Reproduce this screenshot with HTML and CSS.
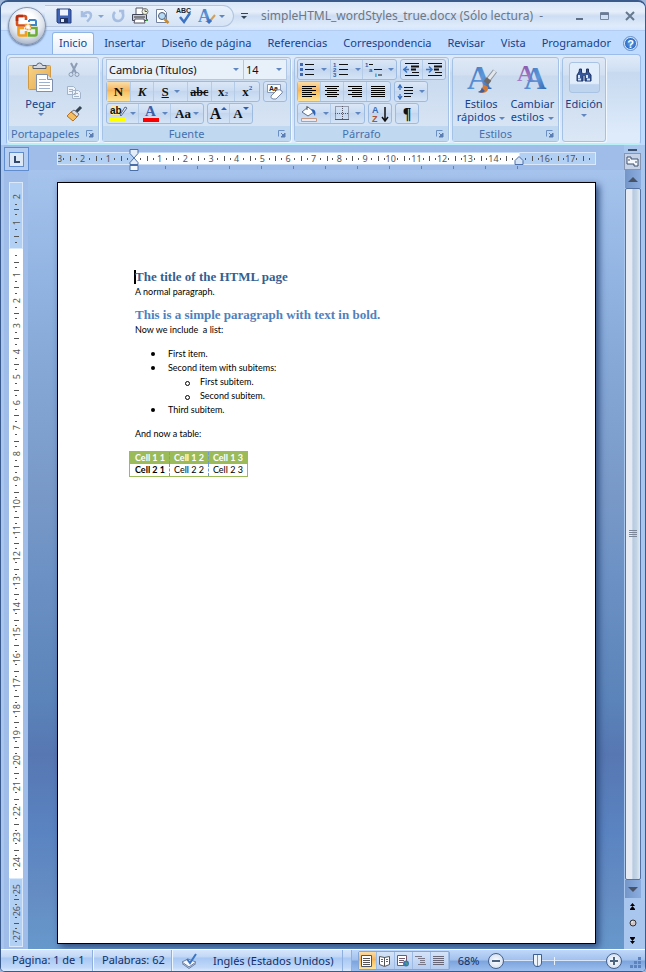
FILE: index.html
```html
<!DOCTYPE html>
<html lang="es">
<head>
<meta charset="utf-8">
<meta name="viewport" content="width=device-width, initial-scale=1">
<title>simpleHTML_wordStyles_true.docx</title>
<link rel="stylesheet" href="styles.css">
</head>
<body>
<svg class="defs" aria-hidden="true">
  <defs>
    <linearGradient id="g-blue" x1="0" y1="0" x2="1" y2="1"><stop offset="0" stop-color="#2f62b0"/><stop offset=".55" stop-color="#5f97da"/><stop offset="1" stop-color="#24549f"/></linearGradient>
    <linearGradient id="g-purple" x1="0" y1="0" x2="0" y2="1"><stop offset="0" stop-color="#7b4fa6"/><stop offset="1" stop-color="#b58ad0"/></linearGradient>
    <linearGradient id="g-clip" x1="0" y1="0" x2="1" y2="1"><stop offset="0" stop-color="#f8d489"/><stop offset="1" stop-color="#e3a94b"/></linearGradient>
    <symbol id="launch" viewBox="0 0 8 8"><path d="M.5 6.500V.5H6.500" fill="none" stroke="#6a8fc3"/><path d="M3 3l3 3M7 3v4H3z" fill="#5a7eb4" stroke="#5a7eb4"/></symbol>
  </defs>
</svg>
<div class="window">
  <header class="titlebar">
    <button class="office" aria-label="Botón de Office">
      <svg viewBox="0 0 24 24" width="24" height="24" fill="none" stroke-width="2.600">
        <path d="M10 11.500H3.500Q2 11.500 2 10V3.500Q2 2 3.500 2H9.500Q11 2 11 3.500V6" stroke="#d9501f"/>
        <path d="M2 7V3.500Q2 2 3.500 2H8" stroke="#b72f12"/>
        <path d="M14 6H19.500Q21 6 21 7.500V11H15M14 6v2" stroke="#3f86c9" stroke-width="2"/>
        <path d="M9 14H3.500V20Q3.500 21.500 5 21.500H11V17" stroke="#f2a01c"/>
        <path d="M14 18V21.500H20Q21.500 21.500 21.500 20V14H16" stroke="#6fae35"/>
        <path d="M10.500 10.500h5v5h-5z" stroke="#e9a13b" stroke-width="1.500" stroke-dasharray="2 1"/>
      </svg>
    </button>
    <div class="qat">
      <button aria-label="Guardar"><svg width="16" height="16" viewBox="0 0 16 16"><path d="M1 1h13l1 1v13H2l-1-1z" fill="#3f63b5" stroke="#26407f"/><path d="M4 1.500h8v6H4z" fill="#eef4fd"/><path d="M4 10h8v5H4z" fill="#23335f"/><path d="M5 11h3v3H5z" fill="#dfe8f6"/></svg></button>
      <button class="wide off" aria-label="Deshacer"><svg width="16" height="16" viewBox="0 0 16 16"><path d="M3 3v5h5M3.500 7.500C6 3 12 3 12 7.500c0 3-2 4-4 6" fill="none" stroke="#8facd9" stroke-width="2.500"/></svg><i class="arrow"></i></button>
      <button class="off" aria-label="Repetir"><svg width="16" height="16" viewBox="0 0 16 16"><path d="M9 3h4v4M12 4c3 4 0 9-4 9-5 0-6-6-3-9" fill="none" stroke="#8facd9" stroke-width="2.500"/></svg></button>
      <button aria-label="Impresión rápida"><svg width="18" height="18" viewBox="0 0 18 18"><path d="M5 7V1h7v6" fill="#fff" stroke="#556"/><path d="M1.500 7.500h14v6h-14z" fill="#c9ccd4" stroke="#3f4556"/><path d="M3 10h11" stroke="#333"/><path d="M4 12h9l1 4H3z" fill="#fff" stroke="#556"/><circle cx="14" cy="4.500" r="3" fill="#f2f4dc" stroke="#777"/><path d="M14 2.500v2h2" fill="none" stroke="#555"/><path d="M15 12h2v2h-2z" fill="#3ba33b"/></svg></button>
      <button aria-label="Vista preliminar"><svg width="16" height="16" viewBox="0 0 16 16"><path d="M2.500 1.500h7l3 3v10h-10z" fill="#fff" stroke="#7484a0"/><circle cx="8" cy="8" r="3.500" fill="#b7daf5" stroke="#4e5b73"/><path d="M10.500 11l4 4" stroke="#c98a2d" stroke-width="2.500"/></svg></button>
      <button aria-label="Ortografía"><svg width="18" height="18" viewBox="0 0 18 18"><text x="1" y="6" class="abc">ABC</text><path d="M5 10l4 5 6-9" fill="none" stroke="#3c72c4" stroke-width="2.500"/></svg></button>
      <button class="wide" aria-label="Estilos"><svg width="18" height="18" viewBox="0 0 18 18"><text x="0" y="15" class="bigA" font-size="18" fill="url(#g-blue)">A</text><path d="M17 8l-5 6" stroke="#d0a060" stroke-width="2"/><path d="M13 13l-3 3" stroke="#3c72c4" stroke-width="3"/></svg><i class="arrow"></i></button>
    </div>
    <button class="more" aria-label="Personalizar"><i></i></button>
    <h1 class="caption">simpleHTML_wordStyles_true.docx (Sólo lectura) &nbsp;-</h1>
    <div class="winbtns">
      <button aria-label="Minimizar"><svg width="10" height="10"><path d="M1 8h7" stroke="#5f7087" stroke-width="2"/></svg></button>
      <button aria-label="Maximizar"><svg width="10" height="10"><path d="M.5 1.500h8v7h-8z" fill="none" stroke="#7587a0"/><path d="M0 3h9" stroke="#6a7b93" stroke-width="2"/></svg></button>
      <button aria-label="Cerrar"><svg width="10" height="10"><path d="M1 1l8 8M9 1l-8 8" stroke="#66788f" stroke-width="2"/></svg></button>
    </div>
  </header>

  <nav class="tabs">
    <a href="#" class="active">Inicio</a><a href="#">Insertar</a><a href="#">Diseño de página</a><a href="#">Referencias</a><a href="#">Correspondencia</a><a href="#">Revisar</a><a href="#">Vista</a><a href="#">Programador</a>
    <button class="help" aria-label="Ayuda">?</button>
  </nav>

  <section class="ribbon">
    <div class="group g-clip">
      <div class="body clip">
        <button class="big"><svg width="28" height="32" viewBox="0 0 28 32"><rect x="1.500" y="3.500" width="22" height="24" rx="1" fill="url(#g-clip)" stroke="#d09a45"/><path d="M6 6.500V3.500h3.500Q10 1 12.500 1T15.500 3.500H19v3z" fill="#d6dae0" stroke="#5c6270"/><path d="M9.500 12.500h11l5 5v12h-16z" fill="#fff" stroke="#7e90ae"/><path d="M20.500 12.500v5h5" fill="#dfe7f3" stroke="#7e90ae"/><path d="M12 17.500h7M12 20.500h11M12 23.500h11M12 26.500h11" stroke="#9db0cc"/></svg><span>Pegar</span><i class="arrow"></i></button>
        <div class="stack">
          <button aria-label="Cortar"><svg width="16" height="16" viewBox="0 0 16 16" fill="none" stroke="#8d9db5"><path d="M5 1l5 10M11 1L6 11" stroke-width="2"/><circle cx="5" cy="12.500" r="2"/><circle cx="11" cy="12.500" r="2"/></svg></button>
          <button aria-label="Copiar"><svg width="16" height="16" viewBox="0 0 16 16" fill="#eff4fb" stroke="#a3b3ca"><path d="M1.500 2.500h6l2 2v6h-8zM6.500 6.500h6l2 2v6h-8z"/><path d="M3 5.500h4M3 7.500h3M8 9.500h4M8 12.500h5"/></svg></button>
          <button aria-label="Copiar formato"><svg width="16" height="16" viewBox="0 0 16 16"><path d="M15 1l-5 5" stroke="#345" stroke-width="3"/><path d="M8 4l5 4-2 3-6-5z" fill="#d9dee6" stroke="#6a6f7d"/><path d="M5 6l6 5-4 4-6-5z" fill="#f3bf62" stroke="#b9711d"/></svg></button>
        </div>
      </div>
      <footer>Portapapeles<svg class="launch" width="8" height="8"><use href="#launch"/></svg></footer>
    </div>

    <div class="group g-font">
      <div class="body">
        <div class="row">
          <div class="combos">
            <label class="combo name"><select aria-label="Fuente"><option>Cambria (Títulos)</option></select><i class="arrow"></i></label>
            <label class="combo size"><select aria-label="Tamaño"><option>14</option></select><i class="arrow"></i></label>
          </div>
        </div>
        <div class="row">
          <div class="set grow">
            <button class="on glyph">N</button><button class="glyph it">K</button><button class="glyph un wide">S<i class="arrow"></i></button><button class="glyph st">abc</button><button class="glyph">x<sub>2</sub></button><button class="glyph">x<sup>2</sup></button>
          </div>
          <div class="set"><button aria-label="Borrar formato"><svg width="18" height="16" viewBox="0 0 18 16"><path d="M1.500.5h13v8h-13z" fill="#fff" stroke="#8a9ab5"/><text x="3" y="7" class="abc">Aa</text><path d="M5 12l6-6q3-1 5 1 1 2-1 3l-5 5H7q-3-1-2-3z" fill="#fff" stroke="#7486a6"/></svg></button></div>
        </div>
        <div class="row">
          <div class="set w98">
            <button class="wide" aria-label="Resaltado"><svg width="18" height="17" viewBox="0 0 18 17"><path d="M1 1h9v9H1z" fill="#ffeaa0"/><text x="0" y="9" class="ab">ab</text><path d="M15 2l-5 8 1 1 6-8z" fill="#dce6f4" stroke="#576b8d"/><path d="M0 13h16v4H0z" fill="#ffff00"/></svg><i class="arrow"></i></button>
            <button class="wide" aria-label="Color de fuente"><svg width="18" height="17" viewBox="0 0 18 17"><text x="3" y="11" class="bigA" font-size="15" fill="#3c61a8">A</text><path d="M1 13h16v4H1z" fill="#fb0000"/></svg><i class="arrow"></i></button>
            <button class="glyph wide">Aa<i class="arrow"></i></button>
          </div>
          <div class="set"><button class="glyph lg">A<b class="tri up"></b></button><button class="glyph">A<b class="tri"></b></button></div>
        </div>
      </div>
      <footer>Fuente<svg class="launch" width="8" height="8"><use href="#launch"/></svg></footer>
    </div>

    <div class="group g-para">
      <div class="body">
        <div class="row">
          <div class="set w100">
            <button class="wide" aria-label="Viñetas"><svg width="16" height="15"><path d="M5 2.500h9M5 7.500h9M5 12.500h9" stroke="#111"/><path d="M0 1h3v3H0zM0 6h3v3H0zM0 11h3v3H0z" fill="#4069b4"/></svg><i class="arrow"></i></button>
            <button class="wide" aria-label="Numeración"><svg width="17" height="15"><path d="M6 2.500h9M6 7.500h9M6 12.500h9" stroke="#111"/><text class="num" x="0" y="5">1</text><text class="num" x="0" y="10">2</text><text class="num" x="0" y="15">3</text></svg><i class="arrow"></i></button>
            <button class="wide" aria-label="Lista multinivel"><svg width="18" height="15"><path d="M4 2.500h4M9 7.500h8M13 13h4" stroke="#111"/><text class="num" x="0" y="5">1</text><text class="num" x="4" y="10">a</text><text class="num" x="10" y="15">i</text></svg><i class="arrow"></i></button>
          </div>
          <div class="set"><button aria-label="Disminuir sangría"><svg width="17" height="15"><path d="M2 1.500h14M9 10.500h7M2 13.500h14" stroke="#111"/><path d="M8 4.500h8M8 7.500h5" stroke="#111" stroke-width="2"/><path d="M0 7.500h6M4 4.500l-3 3 3 3" fill="none" stroke="#3b78c9" stroke-width="1.500"/></svg></button><button aria-label="Aumentar sangría"><svg width="17" height="15"><path d="M2 1.500h14M9 10.500h7M2 13.500h14" stroke="#111"/><path d="M8 4.500h8M8 7.500h5" stroke="#111" stroke-width="2"/><path d="M0 7.500h6M3 4.500l3 3-3 3" fill="none" stroke="#3b78c9" stroke-width="1.500"/></svg></button></div>
        </div>
        <div class="row">
          <div class="set w94">
            <button class="on" aria-label="Izquierda"><svg width="15" height="11"><path d="M0 .5h14M0 2.500h10M0 4.500h14M0 6.500h10M0 8.500h14M0 10.500h10" stroke="#000"/></svg></button><button aria-label="Centrar"><svg width="15" height="11"><path d="M0 .5h14M2 2.500h10M0 4.500h14M2 6.500h10M0 8.500h14M2 10.500h10" stroke="#000"/></svg></button><button aria-label="Derecha"><svg width="15" height="11"><path d="M0 .5h14M4 2.500h10M0 4.500h14M4 6.500h10M0 8.500h14M4 10.500h10" stroke="#000"/></svg></button><button aria-label="Justificar"><svg width="15" height="11"><path d="M0 .5h14M0 2.500h14M0 4.500h14M0 6.500h14M0 8.500h14M0 10.500h14" stroke="#000"/></svg></button>
          </div>
          <div class="set"><button class="wide" aria-label="Interlineado"><svg width="17" height="16"><path d="M7 3.500h9M7 6.500h9M7 9.500h9M7 12.500h7" stroke="#111"/><path d="M3 1v5M3 10v5M1 4l2-3 2 3M1 12l2 3 2-3" fill="none" stroke="#386fc0" stroke-width="1.300"/></svg><i class="arrow"></i></button></div>
        </div>
        <div class="row">
          <div class="set w68"><button class="wide" aria-label="Sombreado"><svg width="18" height="17"><path d="M2 7l6-5 6 5-6 4z" fill="#fff" stroke="#5b6f92"/><path d="M7 5V1" stroke="#555"/><path d="M11 4q6 0 4 7l-2-3z" fill="#2e62b5"/><path d="M1.500 13.500h15v3h-15z" fill="#e6eaf5" stroke="#c79a83"/></svg><i class="arrow"></i></button><button class="wide" aria-label="Bordes"><svg width="15" height="15"><path d="M.5.5h13v13H.5zM7.500 0v14M0 7.500h14" fill="none" stroke="#556" stroke-dasharray="1 1"/><path d="M0 13.500h14" stroke="#556"/></svg><i class="arrow"></i></button></div>
          <div class="set"><button aria-label="Ordenar"><svg width="17" height="18"><text class="az a" x="0" y="8">A</text><text class="az z" x="0" y="17">Z</text><path d="M13 2v13M10 12l3 4 3-4" fill="none" stroke="#111" stroke-width="1.500"/></svg></button></div>
          <div class="set"><button class="mark" aria-label="Mostrar todo">¶</button></div>
        </div>
      </div>
      <footer>Párrafo<svg class="launch" width="8" height="8"><use href="#launch"/></svg></footer>
    </div>

    <div class="group g-style">
      <div class="body pair">
        <button class="big"><svg width="32" height="32" viewBox="0 0 32 32"><text x="2" y="27" class="bigA" font-size="34" fill="url(#g-blue)">A</text><path d="M30 9l-7 9" stroke="#8d949f" stroke-width="5"/><path d="M30 9l-7 9" stroke="#e3e6ea" stroke-width="3"/><path d="M24 17l-3 4" stroke="#6f6a68" stroke-width="6"/><path d="M13 30q5-2 5-8l5 3q1 5-5 6z" fill="#d77a31"/><path d="M13 30q3-1 4-4l3 3q-3 3-7 1z" fill="#2f62b0"/></svg><span>Estilos<br>rápidos <i class="arrow"></i></span></button>
        <button class="big"><svg width="32" height="32" viewBox="0 0 32 32"><text x="1" y="19" class="bigA" font-size="24" fill="url(#g-purple)">A</text><text x="8" y="27" class="bigA" font-size="31" fill="url(#g-blue)">A</text></svg><span>Cambiar<br>estilos <i class="arrow"></i></span></button>
      </div>
      <footer>Estilos<svg class="launch" width="8" height="8"><use href="#launch"/></svg></footer>
    </div>

    <div class="group g-edit">
      <button class="big"><span class="tile"><svg width="16" height="14" viewBox="0 0 16 14"><path d="M3.500 1h2v3l1.500 3v6H1V7l2-3zM10.500 1h2v3L15 7v6H9V7l1.500-3z" fill="#36589b" stroke="#1d3365"/><path d="M6 5h4v3H6z" fill="#36589b"/><path d="M3 7v3M11 7v3M2 11.500h3M11 11.500h3" stroke="#d6e5fa" stroke-width="2"/></svg></span><span>Edición</span><i class="arrow"></i></button>
    </div>
  </section>

  <main class="work">
    <div class="left">
      <button class="tabsel" aria-label="Tabulación"><i></i></button>
      <div class="vruler">
        <div class="seg margin s1"><span class="part"></span><span class="n open"><b>2</b></span><span class="n"><b>1</b></span><span class="half"></span></div>
        <div class="seg s2"><span class="half"></span><span class="n"><b>1</b></span><span class="n"><b>2</b></span><span class="n"><b>3</b></span><span class="n"><b>4</b></span><span class="n"><b>5</b></span><span class="n"><b>6</b></span><span class="n"><b>7</b></span><span class="n"><b>8</b></span><span class="n"><b>9</b></span><span class="n"><b>10</b></span><span class="n"><b>11</b></span><span class="n"><b>12</b></span><span class="n"><b>13</b></span><span class="n"><b>14</b></span><span class="n"><b>15</b></span><span class="n"><b>16</b></span><span class="n"><b>17</b></span><span class="n"><b>18</b></span><span class="n"><b>19</b></span><span class="n"><b>20</b></span><span class="n"><b>21</b></span><span class="n"><b>22</b></span><span class="n"><b>23</b></span><span class="n"><b>24</b></span><span class="part"></span></div>
        <div class="seg margin s3"><span class="n open"><b>25</b></span><span class="n"><b>26</b></span><span class="n"><b>27</b></span></div>
      </div>
    </div>

    <div class="center">
      <div class="hbar">
        <div class="hruler">
          <div class="seg margin h3"><span class="half first"><b>3</b></span><span class="n"><b>2</b></span><span class="n"><b>1</b></span><span class="half edge"></span></div>
          <div class="seg h15"><svg class="indent" width="10" height="22" viewBox="0 0 10 22"><path d="M1 .5h8v4L5 9l4 4.500v2H1v-2L5 9 1 4.500z" fill="#e3edf9" stroke="#4a6fa8"/><path d="M1 16.500h8v5H1z" fill="#f4f8fd" stroke="#4a6fa8"/></svg><span class="half"></span><span class="n"><b>1</b></span><span class="n"><b>2</b></span><span class="n"><b>3</b></span><span class="n"><b>4</b></span><span class="n"><b>5</b></span><span class="n"><b>6</b></span><span class="n"><b>7</b></span><span class="n"><b>8</b></span><span class="n"><b>9</b></span><span class="n"><b>10</b></span><span class="n"><b>11</b></span><span class="n"><b>12</b></span><span class="n"><b>13</b></span><span class="n"><b>14</b></span><span class="half edge"></span></div>
          <div class="seg margin h3"><svg class="rindent" width="10" height="9" viewBox="0 0 10 9"><path d="M5 .5l4 4v4H1v-4z" fill="#d4e2f5" stroke="#4a6fa8"/></svg><span class="half"></span><span class="n"><b>16</b></span><span class="n"><b>17</b></span><span class="half edge"></span></div>
        </div>
        <div class="stops"></div>
      </div>
      <div class="canvas">
        <article class="page">
          <h2 class="h-one"><span class="caret"></span>The title of the HTML page</h2>
          <p>A normal paragraph.</p>
          <h3 class="h-two">This is a simple paragraph with text in bold.</h3>
          <p>Now we include&nbsp; a list:</p>
          <ul>
            <li>First item.</li>
            <li>Second item with subitems:
              <ul><li>First subitem.</li><li>Second subitem.</li></ul>
            </li>
            <li>Third subitem.</li>
          </ul>
          <p>And now a table:</p>
          <table>
            <thead><tr><th>Cell 1 1</th><th>Cell 1 2</th><th>Cell 1 3</th></tr></thead>
            <tbody><tr><th>Cell 2 1</th><td>Cell 2 2</td><td>Cell 2 3</td></tr></tbody>
          </table>
        </article>
      </div>
    </div>

    <div class="right">
      <i class="split"></i>
      <button class="rtoggle" aria-label="Regla"><svg width="13" height="13" viewBox="0 0 13 13"><path d="M1 2h4v2h7v7H8V9H1z" fill="#f5f8fc" stroke="#3f506c"/><path d="M3 4v2M10 6v2" stroke="#3f506c"/></svg></button>
      <div class="scroll"><button class="sb" aria-label="Arriba"><i class="st-up"></i></button><div class="thumb"><i></i></div><button class="sb" aria-label="Abajo"><i class="st-down"></i></button></div>
      <div class="browse">
        <button aria-label="Página anterior"><svg width="7" height="7"><path d="M3.500 0L6 3H1zM3.500 3L6 6H1zM1 6h5v1H1z" fill="#000"/></svg></button>
        <button aria-label="Objeto"><svg width="8" height="8"><circle cx="4" cy="4" r="3" fill="#cfc5c8" stroke="#333"/><path d="M2.500 3.500l1.500-1" stroke="#fff"/></svg></button>
        <button aria-label="Página siguiente"><svg width="7" height="7"><path d="M3.500 7L6 4H1zM3.500 4L6 1H1zM1 0h5v1H1z" fill="#000"/></svg></button>
      </div>
    </div>
  </main>

  <footer class="status">
    <span class="s-page">Página: 1 de 1</span>
    <span class="s-words">Palabras: 62</span>
    <span class="s-proof"><svg width="17" height="16" viewBox="0 0 17 16"><path d="M1 9l6-3 8 3-7 5z" fill="#f5f7fb" stroke="#6c7f9e"/><path d="M1 10.500l7 5 7-5" fill="none" stroke="#6c7f9e"/><path d="M6 6l3 4 6-9" fill="none" stroke="#3b77c6" stroke-width="2"/></svg></span>
    <span class="s-lang">Inglés (Estados Unidos)</span>
    <span class="s-gap"></span>
    <div class="s-right">
      <div class="views">
        <button class="on" aria-label="Diseño de impresión"><svg width="12" height="12"><path d="M.5.5h10v11H.5z" fill="#fff" stroke="#4b5568"/><path d="M2 3.500h7M2 5.500h7M2 7.500h7M2 9.500h7" stroke="#555"/></svg></button>
        <button aria-label="Lectura"><svg width="12" height="12"><path d="M.5 1.500l5 1 5-1v8l-5 2-5-2zM5.500 2v9" fill="#fff" stroke="#555"/><path d="M2 4.500h2M2 6.500h2M7 4.500h2M7 6.500h2" stroke="#666"/></svg></button>
        <button aria-label="Web"><svg width="13" height="12"><path d="M.5.5h9v10h-9z" fill="#fff" stroke="#735a6a"/><path d="M2 3.500h6M2 5.500h5M2 7.500h4" stroke="#735a6a"/><circle cx="9" cy="8.500" r="3" fill="#3978b8"/><path d="M8 8h2v2" stroke="#59ab52" fill="none"/></svg></button>
        <button aria-label="Esquema"><svg width="12" height="12"><path d="M0 1.500h7M3 3.500h7M5 5.500h5M5 7.500h5M3 9.500h8" stroke="#778" /></svg></button>
        <button aria-label="Borrador"><svg width="12" height="12"><path d="M0 1.500h11M0 3.500h11M0 5.500h11M0 7.500h11M0 9.500h11" stroke="#667"/></svg></button>
      </div>
      <button class="pct">68%</button>
      <button class="zoom" aria-label="Alejar"><i></i></button>
      <input class="slider" type="range" min="0" max="100" value="32" aria-label="Zoom">
      <button class="zoom plus" aria-label="Acercar"><i></i></button>
      <svg class="grip" width="12" height="12"><path d="M8 0h3v3H8zM4 4h3v3H4zM8 4h3v3H8zM0 8h3v3H0zM4 8h3v3H4zM8 8h3v3H8z" fill="#5c83bd"/></svg>
    </div>
  </footer>
</div>
</body>
</html>
```
FILE: styles.css
```css
*, *::before, *::after { box-sizing: border-box; }
body { margin: 0; background: #9fb6d8; font: 11px/16px "Noto Sans", "Open Sans", sans-serif; color: #15428b; }
button { font: inherit; color: inherit; border: 0; padding: 0; margin: 0; background: none; display: flex; align-items: center; justify-content: center; }
svg { display: block; flex: none; overflow: visible; }
.defs { position: absolute; width: 0; height: 0; }
.window { min-height: 100vh; display: flex; flex-direction: column; border: 1px solid #3b5a8c; border-top-width: 2px; border-radius: 8px 8px 5px 5px; background: #bfdbff; overflow: hidden; }
.arrow { flex: none; display: inline-block; border: 3px solid transparent; border-top-color: #5f86c0; border-bottom: 0; vertical-align: middle; }

/* Title bar */
.titlebar { height: 29px; display: flex; align-items: center; padding: 0 10px 0 44px; position: relative; background: linear-gradient(#d9e7f9, #e6eefa 35%, #cdddf3 50%, #dfebfb 85%, #d3e6ff); border-bottom: 1px solid #b2cdf1; }
.office { position: absolute; left: 7px; top: 5px; z-index: 2; width: 38px; height: 38px; border-radius: 50%; border: 1px solid #8193b0; background: radial-gradient(circle at 50% 35%, #fff 25%, #dfe4ec 55%, #a9b5c9 80%, #eef2f8); box-shadow: 0 1px 2px #5d7396; }
.qat { display: flex; align-items: center; height: 22px; width: 189px; padding-left: 8px; border: 1px solid #b3c5df; border-left: 0; border-radius: 0 11px 11px 0; background: linear-gradient(#e9f1fb, #d5e3f5); }
.qat button { width: 22px; height: 20px; }
.qat .wide { width: 32px; gap: 3px; }
.qat .off { opacity: .7; }
.more { width: 20px; height: 20px; }
.more i { width: 7px; height: 7px; border-top: 1px solid #345; position: relative; }
.more i::after { content: ""; position: absolute; top: 2px; left: 0; border: 3px solid transparent; border-top-color: #345; border-bottom: 0; }
.caption { margin: 0 0 0 7px; font: 12px/18px "Noto Sans", sans-serif; color: #6d7785; white-space: nowrap; }
.winbtns { margin-left: auto; display: flex; gap: 15px; }
.abc { font: bold 7px "Liberation Sans", sans-serif; fill: #222; }
.ab { font: bold 10px "Liberation Sans", sans-serif; fill: #111; }
.num { font: bold 6px "Liberation Sans", sans-serif; fill: #2f5da8; }
.az { font: bold 9px "Liberation Sans", sans-serif; }
.bigA { font-family: "Liberation Serif", serif; font-weight: bold; }
.a { fill: #3568b5; }
.z { fill: #a8543b; }

/* Tabs */
.tabs { height: 23px; display: flex; align-items: flex-end; padding: 0 8px 0 51px; background: #bfdbff; }
.tabs a { color: #15428b; text-decoration: none; padding: 3px 8px; height: 22px; white-space: nowrap; }
.tabs .active { padding: 2px 6px; margin-right: 2px; border: 1px solid #8eb4e5; border-bottom: 0; border-radius: 3px 3px 0 0; background: linear-gradient(#fff, #e4eefb); }
.help { flex: none; margin: 0 0 4px auto; width: 13px; height: 13px; border-radius: 50%; border: 1px solid #d9e8fb; outline: 1px solid #6a8ec4; background: radial-gradient(#5aa0ee, #1b55b0); color: #fff; font: bold 11px/12px "Liberation Sans", sans-serif; }

/* Ribbon */
.ribbon { display: flex; gap: 3px; height: 91px; margin: 0 4px 0 5px; padding: 2px 1px 1px; border: 1px solid #9cbde9; border-bottom: 2px solid #b8f0f8; border-radius: 4px; background: linear-gradient(#e0ebf9, #cfdff3 18%, #c6d9ef 20%, #deebfb 90%); }
.group { flex: none; display: flex; flex-direction: column; border: 1px solid #a4c2e6; border-radius: 3px; background: linear-gradient(#dfe9f6, #d2e0f2 20%, #c9daef 22%, #dbe7f5); box-shadow: 1px 1px 0 #f0f7ff; }
.group > footer { display: flex; align-items: center; justify-content: center; height: 15px; padding: 0 4px 0 2px; background: #c1d8f1; color: #4470ae; }
.group > footer .launch { margin-left: auto; }
.g-font > footer, .g-para > footer, .g-style > footer { position: relative; padding: 0 20px 0 0; }
.g-font .launch, .g-para .launch, .g-style .launch { position: absolute; right: 4px; top: 4px; }
.g-clip { width: 91px; }
.g-font { width: 189px; }
.g-para { width: 155px; }
.g-style { width: 107px; }
.g-edit { width: 44px; }
.body { flex: 1; padding: 1px 3px 0; display: flex; flex-direction: column; gap: 1px; min-height: 0; }
.row { display: flex; justify-content: flex-start; gap: 3px; }
.g-para .body { padding: 1px 2px 0; }
.clip { flex-direction: row; justify-content: space-between; }
.big { flex-direction: column; justify-content: flex-start; line-height: 13px; text-align: center; gap: 3px; white-space: nowrap; }
.clip .big { width: 64px; padding-top: 3px; }
.stack { display: flex; flex-direction: column; gap: 6px; padding: 3px 13px 0 0; margin-left: -4px; }
.set { display: flex; height: 21px; border: 1px solid #9dbbe0; border-radius: 3px; background: linear-gradient(#dbe7f6, #cbdcf2 45%, #c2d6ef 50%, #d5e4f6); }
.set button { width: 22px; border-right: 1px solid #b5cce9; flex: 1 0 auto; }
.set button:last-child { border-right: 0; }
.set .wide { width: 32px; gap: 5px; }
.set .on, .views .on { background: linear-gradient(#fbdda8, #f5b45c 45%, #f9c465 55%, #fde39a); }
.grow { width: 154px; }
.w98 { width: 98px; }
.w100 { width: 100px; }
.w94 { width: 94px; }
.w68 { width: 68px; }
.w98 .wide { gap: 2px; }
.glyph { font: bold 13px/16px "Liberation Serif", serif; color: #111; }
.glyph.it { font-style: italic; }
.glyph.un { text-decoration: underline; }
.glyph.st { text-decoration: line-through; font-size: 12px; }
.glyph.lg { font-size: 16px; }
.glyph sub, .glyph sup { font-size: 7px; line-height: 7px; color: #2d5fae; }
.glyph sub { align-self: flex-end; margin-bottom: 3px; }
.glyph sup { align-self: flex-start; margin-top: 3px; }
.mark { font: bold 16px/16px "Liberation Serif", serif; color: #111; }
.tri { align-self: flex-start; margin-top: 3px; border: 3px solid transparent; border-top-color: #2d5fae; border-bottom: 0; }
.tri.up { border-top: 0; border-bottom: 3px solid #2d5fae; }
.combos { display: flex; width: 182px; height: 21px; border: 1px solid #b0c8e6; background: #e8f0fa; }
.combo { position: relative; display: flex; align-items: center; }
.combo.name { flex: 1; border-right: 1px solid #b0c8e6; }
.combo.size { width: 42px; }
.combo select { appearance: none; width: 100%; border: 0; background: none; font: 11px/16px "Noto Sans", sans-serif; color: #111; padding: 0 0 0 2px; }
.combo .arrow { position: absolute; right: 4px; }
.pair { flex-direction: row; justify-content: center; gap: 5px; padding-top: 4px; }
.pair .arrow { margin-left: 1px; }
.g-edit .big { padding-top: 4px; gap: 4px; }
.tile { display: flex; justify-content: center; padding-top: 5px; width: 31px; height: 31px; border: 1px solid #a9c3e4; border-radius: 3px; background: linear-gradient(#e1edfb 70%, #bed4ef 75%); }

/* Work area */
.work { flex: 1; display: flex; padding: 0 4px 0 3px; background: #a9c6ef; }
.left { width: 24px; display: flex; flex-direction: column; background: #9fbde8; padding: 2px 0; }
.tabsel { width: 25px; height: 24px; margin-bottom: 11px; border: 1px solid #5f8dcf; background: #b4cdf0; position: relative; }
.tabsel i { width: 15px; height: 15px; border: 1px solid #5f8dcf; background: #dde8f7; }
.tabsel i::after { content: ""; position: absolute; left: 9px; top: 8px; width: 6px; height: 7px; border: solid #33496c; border-width: 0 0 2px 2px; }
.vruler { flex: 1; display: flex; flex-direction: column; width: 14px; margin-left: 5px; }
.seg { display: flex; background: #fff; min-width: 0; min-height: 0; position: relative; font: 9px/11px "Noto Sans", sans-serif; color: #555; }
.seg.margin { background: #b2cff4; outline: 1px solid #d9e8fb; outline-offset: -1px; }
.seg b { font-weight: normal; }
.vruler .seg { flex-direction: column; }
.s1 { flex: 67 0 0; }
.s2 { flex: 629 0 0; }
.s3 { flex: 69 0 0; }
.vruler span { flex: 10 1 0; min-height: 0; display: flex; align-items: center; justify-content: center; background: linear-gradient(#555, #555) 50% 0 / 5px 1px no-repeat, linear-gradient(#555, #555) 50% 22% / 2px 1px no-repeat, linear-gradient(#555, #555) 50% 78% / 2px 1px no-repeat; }
.vruler b { writing-mode: vertical-rl; transform: rotate(180deg); }
.vruler .half { flex-grow: 5; background: linear-gradient(#555, #555) 50% 50% / 2px 1px no-repeat; }
.vruler .part { flex-grow: 1; background: none; }
.vruler .margin .half { background: linear-gradient(#555, #555) 50% 0 / 5px 1px no-repeat, linear-gradient(#555, #555) 50% 50% / 2px 1px no-repeat; }
.vruler .open { flex-grow: 9; background: linear-gradient(#555, #555) 50% 85% / 2px 1px no-repeat; }

.center { flex: 1; min-width: 0; display: flex; flex-direction: column; }
.hbar { height: 25px; padding: 7px 28px 0 29px; background: #9fbde8; }
.hruler { display: flex; height: 13px; }
.hruler .seg { border: solid #c9dcf5; border-width: 1px 0; }
.h3 { flex: 3 0 0; }
.h15 { flex: 15 0 0; }
.hruler span { flex: 2 1 0; min-width: 0; display: flex; align-items: center; justify-content: center; background: linear-gradient(#555, #555) 0 50% / 1px 5px no-repeat, linear-gradient(#555, #555) 23% 50% / 1px 2px no-repeat, linear-gradient(#555, #555) 77% 50% / 1px 2px no-repeat; }
.hruler .half { flex-grow: 1; background: linear-gradient(#555, #555) 50% 50% / 1px 2px no-repeat; }
.hruler .edge { background: linear-gradient(#555, #555) 0 50% / 1px 5px no-repeat, linear-gradient(#555, #555) 50% 50% / 1px 2px no-repeat; }
.hruler .first { justify-content: flex-start; }
.indent { position: absolute; z-index: 1; left: -5px; top: -4px; }
.rindent { position: absolute; z-index: 1; left: -5px; top: 3px; }
.stops { height: 3px; margin: 1px 78px 0 77px; background: repeating-linear-gradient(90deg, transparent 0 31px, #8c7288 31px 32px); }
.canvas { flex: 1; display: flex; padding: 12px 28px 5px 29px; background: linear-gradient(#a5c3ec, #92b4e2 14%, #86a9d8 24%, #7899c8 42%, #6c91c4 52%, #5b84ba 68%, #5777b2 75%, #5a84c1 85%, #658dc3 93%, #6698cc); }
.page { flex: 1; border: 1px solid #000; background: #fff; padding: 87px 77px 0; box-shadow: 3px 3px 7px #2e4b7c; color: #000; font: 9px/14px Lato, sans-serif; }
.page p, .page ul { margin: 0 0 10px; }
.page p + h3 { margin-top: -1px; }
.h-one, .h-two { margin: 0; height: 15px; font: bold 13px/13px "Liberation Serif", serif; color: #365f91; display: flex; }
.h-two { color: #4f81bd; }
.caret { width: 2px; height: 14px; margin-right: -1px; margin-left: -1px; background: #000; }
.page ul { list-style: none; padding: 0 0 0 33px; }
.page li { position: relative; }
.page li::before { content: ""; position: absolute; left: -17px; top: 5px; width: 4px; height: 4px; border-radius: 50%; background: #000; }
.page ul ul { margin: 0; padding-left: 32px; }
.page ul ul li::before { width: 5px; height: 5px; border: 1px solid #000; background: none; left: -15px; top: 6px; }
table { border-collapse: collapse; margin-left: -6px; line-height: 12px; border: 1px solid #9bbb59; }
th, td { padding: 0 4px; border-left: 1px dashed #6f9bd1; white-space: nowrap; }
th:first-child { border-left: 0; padding-left: 5px; }
thead th { background: #9bbb59; color: #fff; }

.right { width: 17px; display: flex; flex-direction: column; align-items: center; background: #a9c6ef; padding-top: 4px; }
.split { width: 9px; height: 2px; background: #3f506c; margin-bottom: 2px; }
.rtoggle { width: 17px; height: 17px; border: 1px solid #8696b2; background: #c4d1e6; }
.scroll { flex: 1; display: flex; flex-direction: column; width: 16px; }
.sb { height: 18px; background: linear-gradient(90deg, #7395c8, #8cade0); }
.st-up, .st-down { border: 5px solid transparent; border-bottom-color: #485368; border-top: 0; }
.st-down { border-top: 5px solid #485368; border-bottom: 0; }
.thumb { flex: 1; display: flex; align-items: center; justify-content: center; border: 1px solid #5672a2; border-radius: 2px; background: linear-gradient(90deg, #e6eaf2 40%, #b7cbe0 50%, #c3d5e5 75%, #e0eaf2); }
.thumb i { width: 8px; height: 8px; background: repeating-linear-gradient(#7b8798 0 1px, transparent 1px 2px); }
.browse { display: flex; flex-direction: column; align-items: center; justify-content: space-around; height: 51px; background: #a9c6ef; }

/* Status bar */
.status { height: 22px; display: flex; align-items: stretch; border-top: 1px solid #fff; background: linear-gradient(#d6e6fa, #c3d9f7 30%, #a9c8f3 40%, #c2dafa 85%, #dcebfd); color: #122f68; line-height: 20px; padding-left: 1px; white-space: nowrap; }
.status > span { flex: none; }
.s-page, .s-words, .s-gap { border-right: 1px solid #8fb0de; box-shadow: 1px 0 0 #eef6ff; padding: 0 9px 0 10px; }
.s-page { width: 91px; }
.s-words { width: 79px; padding-left: 9px; }
.s-proof, .s-lang { display: flex; align-items: center; }
.s-proof { padding: 0 15px 0 9px; }
.s-lang { padding-right: 8px; }
.s-gap { width: 10px; padding: 0; border-left: 1px solid #8fb0de; }
.s-right { flex: 1; min-width: 0; display: flex; align-items: center; padding: 0 3px 0 6px; background: linear-gradient(#c0d8f8, #a4c2ee 45%, #7da5dd 55%, #9dbfef); }
.views { display: flex; height: 19px; border: 1px solid #84a6d6; border-radius: 2px; background: linear-gradient(#d4e3f8, #b5cdf0); }
.views button { width: 18px; border-right: 1px solid #9dbbe3; }
.pct { width: 38px; flex: none; }
.zoom { width: 16px; height: 16px; flex: none; border: 1px solid #46618c; border-radius: 50%; background: radial-gradient(#fff, #c6d6ec); position: relative; }
.zoom i { width: 8px; height: 2px; background: #4b6580; }
.plus i::after { content: ""; position: absolute; left: 6px; top: 3px; width: 2px; height: 8px; background: #4b6580; }
.slider { appearance: none; flex: 1; width: 0; min-width: 0; height: 14px; margin: 0; background: linear-gradient(#eaf2fc, #eaf2fc) 50% 50% / 1px 8px no-repeat, linear-gradient(#d9e7f9, #d9e7f9) 0 50% / 100% 1px no-repeat; }
.slider::-webkit-slider-thumb { appearance: none; width: 9px; height: 13px; border: 1px solid #3e5f94; border-radius: 1px 1px 5px 5px; background: linear-gradient(90deg, #eef4fc 40%, #7897c6 40% 60%, #eef4fc 60%); }
.grip { margin: 4px 0 0 8px; }
```
